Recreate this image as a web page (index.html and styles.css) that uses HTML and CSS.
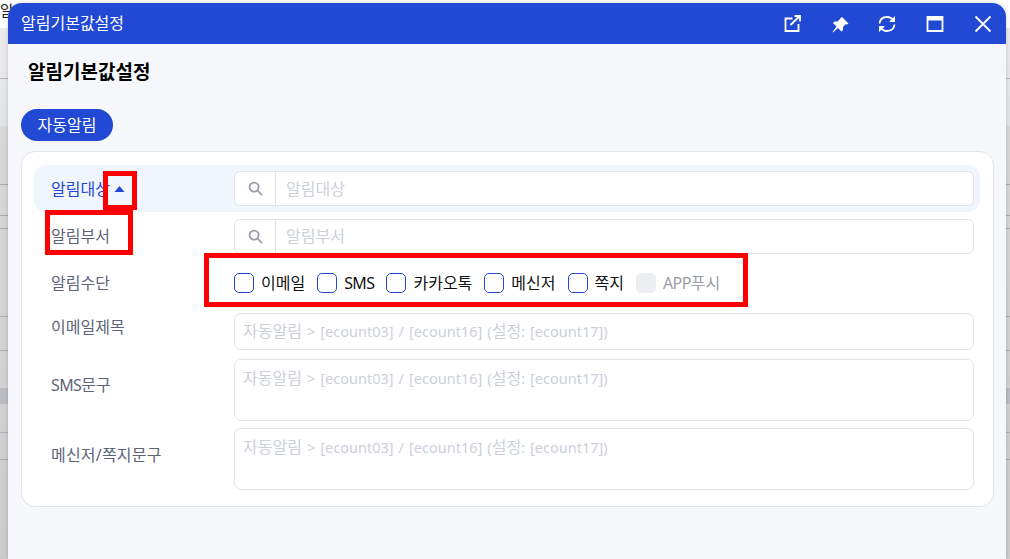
FILE: index.html
```html
<!DOCTYPE html>
<html lang="ko">
<head>
<meta charset="utf-8">
<title>알림기본값설정</title>
<link rel="stylesheet" href="styles.css">
</head>
<body>
<div class="backdrop"><span class="back-text">알</span></div>
<div class="modal">
  <header class="titlebar">
    <span class="titlebar-text">알림기본값설정</span>
    <div class="titlebar-icons">
      <svg class="ticon" viewBox="0 0 20 20"><path d="M11.500 4.500H4.500v12.500h13V10M9.500 11 18.700 2M13.500 2h5.500v5.500"/></svg>
      <svg class="ticon" viewBox="0 0 20 20"><path class="fill" d="M13 3l6.500 6.500-1.500 1-1.500-.3-2.500 2.800v3l-1.500 1.500L9 14l-5 4.500-.5-.5 4-5.500L4 9l1.500-1.500h3L11 5v-.5z"/></svg>
      <svg class="ticon" viewBox="0 0 20 20"><path d="M2.500 9.500C3 5.500 6 3 10 3c2.800 0 5 1.300 6.500 3.500M17.500 10.500c-.5 4-3.500 6.500-7.500 6.500-2.800 0-5-1.300-6.500-3.500"/><path class="fill-only" d="M18 2v6h-6zM2 18v-6h6z"/></svg>
      <svg class="ticon" viewBox="0 0 20 20"><path d="M2.500 3h15v14h-15z"/><path class="bar" d="M2.500 5h15"/></svg>
      <svg class="ticon" viewBox="0 0 20 20"><path d="m2.500 2.500 15 15M17.500 2.500l-15 15"/></svg>
    </div>
  </header>
  <main class="content">
    <h1 class="heading">알림기본값설정</h1>
    <button class="pill" type="button">자동알림</button>
    <section class="card">
      <div class="row row-active">
        <div class="label label-active">알림대상<svg class="caret" viewBox="0 0 10 6"><path d="M5 0l5 6H0z"/></svg></div>
        <div class="search">
          <span class="search-btn"><svg class="search-icon" viewBox="0 0 16 16"><circle cx="6.500" cy="6.500" r="4.800"/><path d="m10 10 5 5"/></svg></span>
          <span class="placeholder">알림대상</span>
        </div>
      </div>
      <div class="row row-second">
        <div class="label">알림부서</div>
        <div class="search">
          <span class="search-btn"><svg class="search-icon" viewBox="0 0 16 16"><circle cx="6.500" cy="6.500" r="4.800"/><path d="m10 10 5 5"/></svg></span>
          <span class="placeholder">알림부서</span>
        </div>
      </div>
      <div class="row row-channels">
        <div class="label">알림수단</div>
        <div class="checks">
          <label class="check"><span class="box"></span>이메일</label>
          <label class="check"><span class="box"></span><span class="latin">SMS</span></label>
          <label class="check"><span class="box"></span>카카오톡</label>
          <label class="check"><span class="box"></span>메신저</label>
          <label class="check"><span class="box"></span>쪽지</label>
          <label class="check check-off"><span class="box"></span><span class="latin">APP</span>푸시</label>
        </div>
      </div>
      <div class="row row-subject">
        <div class="label label-up">이메일제목</div>
        <div class="field field-line placeholder"><span class="ko">자동알림</span> &gt; [ecount03] / [ecount16] (<span class="ko">설정</span>: [ecount17])</div>
      </div>
      <div class="row row-text">
        <div class="label label-up"><span class="latin">SMS</span>문구</div>
        <div class="field field-area placeholder"><span class="ko">자동알림</span> &gt; [ecount03] / [ecount16] (<span class="ko">설정</span>: [ecount17])</div>
      </div>
      <div class="row row-text">
        <div class="label label-up label-low">메신저/쪽지문구</div>
        <div class="field field-area placeholder"><span class="ko">자동알림</span> &gt; [ecount03] / [ecount16] (<span class="ko">설정</span>: [ecount17])</div>
      </div>
    </section>
  </main>
</div>
<div class="mark mark-caret"></div>
<div class="mark mark-dept"></div>
<div class="mark mark-channels"></div>
</body>
</html>
```
FILE: styles.css
```css
* { box-sizing: border-box; }
html, body { margin: 0; height: 100%; overflow: hidden; }
body {
  font-family: "Noto Sans", "Noto Sans CJK KR", sans-serif;
  background: #fff;
}
.backdrop {
  position: absolute;
  inset: 0;
  overflow: hidden;
  background:
    linear-gradient(#b9b9bd, #b9b9bd) 0 78px / 100% 1px no-repeat,
    linear-gradient(#bcbdc2, #bcbdc2) 0 388px / 100% 16px no-repeat,
    linear-gradient(#b0b0b4, #b0b0b4) 0 432px / 100% 1px no-repeat,
    linear-gradient(#aaa, #aaa) 0 184px / 100% 1px no-repeat,
    linear-gradient(#aaa, #aaa) 0 215px / 100% 1px no-repeat,
    linear-gradient(#aaa, #aaa) 0 228px / 100% 1px no-repeat,
    linear-gradient(#aaa, #aaa) 0 316px / 100% 1px no-repeat,
    linear-gradient(#aaa, #aaa) 0 350px / 100% 1px no-repeat,
    linear-gradient(#aaa, #aaa) 0 459px / 100% 1px no-repeat,
    linear-gradient(#fff 0, #fff 28px, #ececee 28px, #e2e3e5 126px, #d8d8d8 127px, #cccccc 100%);
}
.back-text {
  position: absolute;
  left: 0;
  top: -1px;
  font-size: 15px;
  color: #222;
}
.modal {
  position: absolute;
  left: 8px;
  top: 3px;
  width: 998px;
  height: 556px;
  background: #f6f7fb;
  border-radius: 14px 14px 0 0;
  box-shadow: 0 0 4px rgba(0, 0, 0, .18);
  display: flex;
  flex-direction: column;
  overflow: hidden;
}
.titlebar {
  flex: none;
  height: 41px;
  background: #2149d4;
  display: flex;
  align-items: center;
  justify-content: space-between;
  padding: 0 13px;
  color: #fff;
}
.titlebar-text { font-size: 16px; line-height: 22px; padding-bottom: 2px; }
.titlebar-icons { display: flex; gap: 28px; align-items: center; }
.ticon {
  width: 20px;
  height: 20px;
  fill: none;
  stroke: #fff;
  stroke-width: 1.800;
}
.ticon .fill { fill: #fff; stroke: none; }
.ticon .fill-only { fill: #fff; stroke: none; }
.ticon .bar { stroke-width: 3; }
.content { flex: 1; padding: 0 12px 0 13px; }
.heading {
  margin: 15px 0 0 7px;
  font-size: 19px;
  line-height: 26px;
  font-weight: 700;
  color: #000;
}
.pill {
  display: block;
  margin: 24px 0 10px;
  width: 92px;
  height: 32px;
  padding: 0;
  border: 0;
  border-radius: 16px;
  background: #2149d4;
  color: #fff;
  font: 16px/32px "Noto Sans", "Noto Sans CJK KR", sans-serif;
}
.card {
  height: 356px;
  background: #fff;
  border: 1px solid #e2e4ea;
  border-radius: 14px;
  padding: 13px 12px 0;
}
.row {
  display: flex;
  align-items: center;
  padding: 0 7px 0 16px;
}
.row-active {
  height: 47px;
  background: #f0f5fe;
  border-radius: 12px;
  padding-right: 6px;
  margin-right: 1px;
}
.row-second { height: 47px; padding-top: 1px; }
.row-channels { height: 48px; }
.row-subject { height: 48px; }
.row-text { height: 69px; }
.label {
  flex: none;
  width: 183px;
  margin-left: 1px;
  font-size: 16px;
  line-height: 20px;
  color: #5c6478;
}
.label-active { color: #2149d4; display: flex; align-items: center; }
.label-up { padding-bottom: 9px; }
.label-low { padding-bottom: 7px; letter-spacing: .2px; }
.latin { font-size: 16px; letter-spacing: -.6px; }
.ko { font-size: 16px; }
.caret { width: 11px; height: 6px; margin-left: 4px; fill: #2149d4; }
.search {
  flex: 1;
  height: 35px;
  display: flex;
  align-items: center;
  background: #fff;
  border: 1px solid #e2e4ea;
  border-radius: 6px;
}
.search-btn {
  flex: none;
  width: 41px;
  height: 100%;
  display: flex;
  align-items: center;
  justify-content: center;
  border-right: 1px solid #e2e4ea;
}
.search-icon {
  width: 15px;
  height: 15px;
  fill: none;
  stroke: #9aa0a8;
  stroke-width: 2;
}
.placeholder {
  font-size: 16px;
  line-height: 20px;
  color: #ccd0d8;
}
.search .placeholder { padding-left: 10px; }
.checks { display: flex; align-items: center; }
.check {
  display: flex;
  align-items: center;
  font-size: 16px;
  line-height: 20px;
  color: #111;
  margin-right: 12px;
}
.box {
  flex: none;
  width: 20px;
  height: 20px;
  margin-right: 7px;
  background: #fff;
  border: 1.500px solid #2149d4;
  border-radius: 5px;
}
.check-off { color: #9a9ea6; margin-right: 0; }
.check-off .box { background: #eceef1; border-color: #eceef1; }
.field {
  flex: 1;
  background: #fff;
  border: 1px solid #e2e4ea;
  border-radius: 7px;
  font-size: 14.500px;
  word-spacing: 1.300px;
}
.field-line { height: 37px; padding: 7px 8px 0; }
.field-area { height: 62px; padding: 8px 8px 0; }
.mark {
  position: absolute;
  border: 5px solid #fe0000;
}
.mark-caret { left: 103px; top: 171px; width: 34px; height: 39px; }
.mark-dept { left: 45px; top: 210px; width: 88px; height: 45px; }
.mark-channels { left: 204px; top: 253px; width: 544px; height: 54px; }
```
